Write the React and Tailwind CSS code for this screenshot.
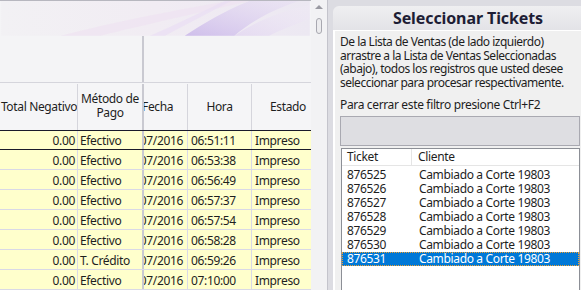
import React from 'react';

const rows = [
  { pago: 'Efectivo', hora: '06:51:11' },
  { pago: 'Efectivo', hora: '06:53:38' },
  { pago: 'Efectivo', hora: '06:56:49' },
  { pago: 'Efectivo', hora: '06:57:37' },
  { pago: 'Efectivo', hora: '06:57:54' },
  { pago: 'Efectivo', hora: '06:58:28' },
  { pago: 'T. Crédito', hora: '06:59:26' },
  { pago: 'Efectivo', hora: '07:10:00' },
];

const tickets = ['876525', '876526', '876527', '876528', '876529', '876530', '876531'];

const font = { fontFamily: '"Segoe UI", "Noto Sans", sans-serif' };

const Banner = () => (
  <svg width="311" height="35" viewBox="0 0 311 35" className="block">
    <defs>
      <linearGradient id="bg" x1="0" y1="0" x2="1" y2="0">
        <stop offset="0" stopColor="#f2f1f4" />
        <stop offset="0.5" stopColor="#f1ecf3" />
        <stop offset="1" stopColor="#ece8f2" />
      </linearGradient>
      <linearGradient id="sw1" x1="0" y1="1" x2="1" y2="0">
        <stop offset="0" stopColor="#cbb9ea" stopOpacity="0.9" />
        <stop offset="1" stopColor="#e6dcf3" stopOpacity="0.4" />
      </linearGradient>
      <linearGradient id="sw2" x1="0" y1="1" x2="1" y2="0">
        <stop offset="0" stopColor="#e2d6f1" stopOpacity="0.8" />
        <stop offset="1" stopColor="#f1ebf6" stopOpacity="0.3" />
      </linearGradient>
    </defs>
    <rect width="311" height="35" fill="url(#bg)" />
    <path d="M60 35 C110 22 170 10 230 0 L250 0 C200 12 140 25 100 35 Z" fill="#efe3f1" opacity="0.8" />
    <path d="M185 35 C205 22 225 10 250 0 L300 0 C270 10 250 22 235 35 Z" fill="url(#sw1)" />
    <path d="M235 35 C255 22 280 10 311 4 L311 18 C295 24 280 30 270 35 Z" fill="url(#sw2)" />
    <path d="M150 35 C175 24 200 12 225 0 L232 0 C205 14 182 26 165 35 Z" fill="#e9def3" opacity="0.7" />
  </svg>
);

const HeadCell = ({ w, children, border = true, className = '' }) => (
  <div
    className={`h-full flex items-center justify-center text-center overflow-hidden whitespace-nowrap ${border ? 'border-r border-[#d5d5dc]' : ''} ${className}`}
    style={{ width: w }}
  >
    {children}
  </div>
);

const App = () => {
  return (
    <div className="w-[581px] h-[290px] overflow-hidden flex bg-[#dcdce2] text-[12px] tracking-[-0.35px] text-[#1e1e1e]" style={font}>
      {/* left table */}
      <div className="w-[311px] flex flex-col bg-[#f4f4f6]">
        <div className="h-px bg-[#b7b7bf]" />
        <Banner />
        <div className="h-[47px] flex">
          <div className="w-[142px]" />
          <div className="w-[2px] bg-[#c9c9d1]" />
          <div className="flex-1" />
        </div>
        <div className="h-[48px] flex border-t border-[#d5d5dc] bg-[#f5f5f7] pt-[1px]">
          <HeadCell w={78}><span className="pl-[1px]">Total Negativo</span></HeadCell>
          <HeadCell w={64} border={false}>
            <div className="leading-[14px] -mt-[2px]">Método de<br />Pago</div>
          </HeadCell>
          <div className="w-[2px] bg-[#c9c9d1]" />
          <div className="w-[44px] h-full flex items-center overflow-hidden whitespace-nowrap border-r border-[#d5d5dc]">
            <span className="-ml-[2px]">Fecha</span>
          </div>
          <HeadCell w={64}>Hora</HeadCell>
          <div className="flex-1 h-full flex items-center whitespace-nowrap pl-[18px]">Estado</div>
        </div>
        <div className="flex flex-col">
          {rows.map((r, i) => (
            <div
              key={i}
              className={`h-[20px] flex bg-[#ffffcc] leading-[16px] ${i === 0 ? 'border-y border-[#1a1a2a]' : 'border-b border-[#d9d9e6]'}`}
            >
              <div className="w-[78px] flex items-center justify-end pr-[2px] pt-[2px] border-r border-[#d9d9e6]">0.00</div>
              <div className="w-[64px] flex items-center pl-[2px] pt-[2px] whitespace-nowrap">{r.pago}</div>
              <div className="w-[2px] bg-[#c9c9d1]" />
              <div className="w-[44px] flex items-center justify-end pr-[4px] pt-[2px] overflow-hidden whitespace-nowrap border-r border-[#d9d9e6]">
                <span>16/07/2016</span>
              </div>
              <div className="w-[64px] flex items-center pl-[3px] pt-[2px] border-r border-[#d9d9e6]">{r.hora}</div>
              <div className="flex-1 flex items-center pl-[3px] pt-[2px]">Impreso</div>
            </div>
          ))}
        </div>
      </div>

      {/* scrollbar */}
      <div className="w-[16px] bg-[#f2f2f4] flex flex-col items-center">
        <div className="mt-[5px] w-0 h-0 border-l-[4px] border-r-[4px] border-b-[4px] border-l-transparent border-r-transparent border-b-[#9a9aa2]" />
        <div className="mt-[9px] w-[6px] h-[16px] rounded-full border border-[#a8a8b0] bg-[#ececee]" />
      </div>
      <div className="w-px bg-[#c4c4cc]" />
      <div className="w-[5px]" />

      {/* right panel */}
      <div className="flex-1 flex flex-col pt-[6px]">
        <div className="h-[24px] rounded-tl-[6px] bg-gradient-to-b from-[#efeff1] to-[#e3e3e7] flex items-center justify-center pl-[22px]">
          <span className="text-[16px] font-bold tracking-[-0.1px] text-[#1d1d35]">Seleccionar Tickets</span>
        </div>
        <div className="flex-1 flex flex-col bg-[#f0f0f0] border-t border-l-2 border-white pl-[5px]">
          <p className="pt-[4px] leading-[13.5px] tracking-[-0.5px]">
            De la Lista de Ventas (de lado izquierdo) arrastre a la Lista de Ventas Seleccionadas (abajo), todos los registros que usted desee seleccionar para procesar respectivamente.
          </p>
          <p className="mt-[9px] leading-[13.5px]">Para cerrar este filtro presione Ctrl+F2</p>
          <div className="mt-[4px] mr-px h-[30px] bg-[#dedee2] border border-[#a9a9b1]" />
          <div className="mt-[2px] ml-px mr-px flex-1 bg-white border border-[#8c8f96] border-b-0">
            <div className="h-[17px] flex border-b border-[#e5e5e5] items-center leading-[16px]">
              <div className="w-[70px] h-full flex items-center pl-[5px] border-r border-[#e5e5e5]">Ticket</div>
              <div className="pl-[6px]">Cliente</div>
            </div>
            <div className="pt-[2px]">
              {tickets.map((t, i) => {
                const sel = i === tickets.length - 1;
                return (
                  <div
                    key={t}
                    className={`h-[14px] flex items-center whitespace-nowrap leading-[12px] ${sel ? 'bg-[#0078d7] text-white border border-dotted border-[#f0a030]' : 'border border-transparent'}`}
                  >
                    <div className="w-[70px] pl-[4px]">{t}</div>
                    <div className="pl-[6px]">Cambiado a Corte 19803</div>
                  </div>
                );
              })}
            </div>
          </div>
        </div>
      </div>
    </div>
  );
};

export default App;
